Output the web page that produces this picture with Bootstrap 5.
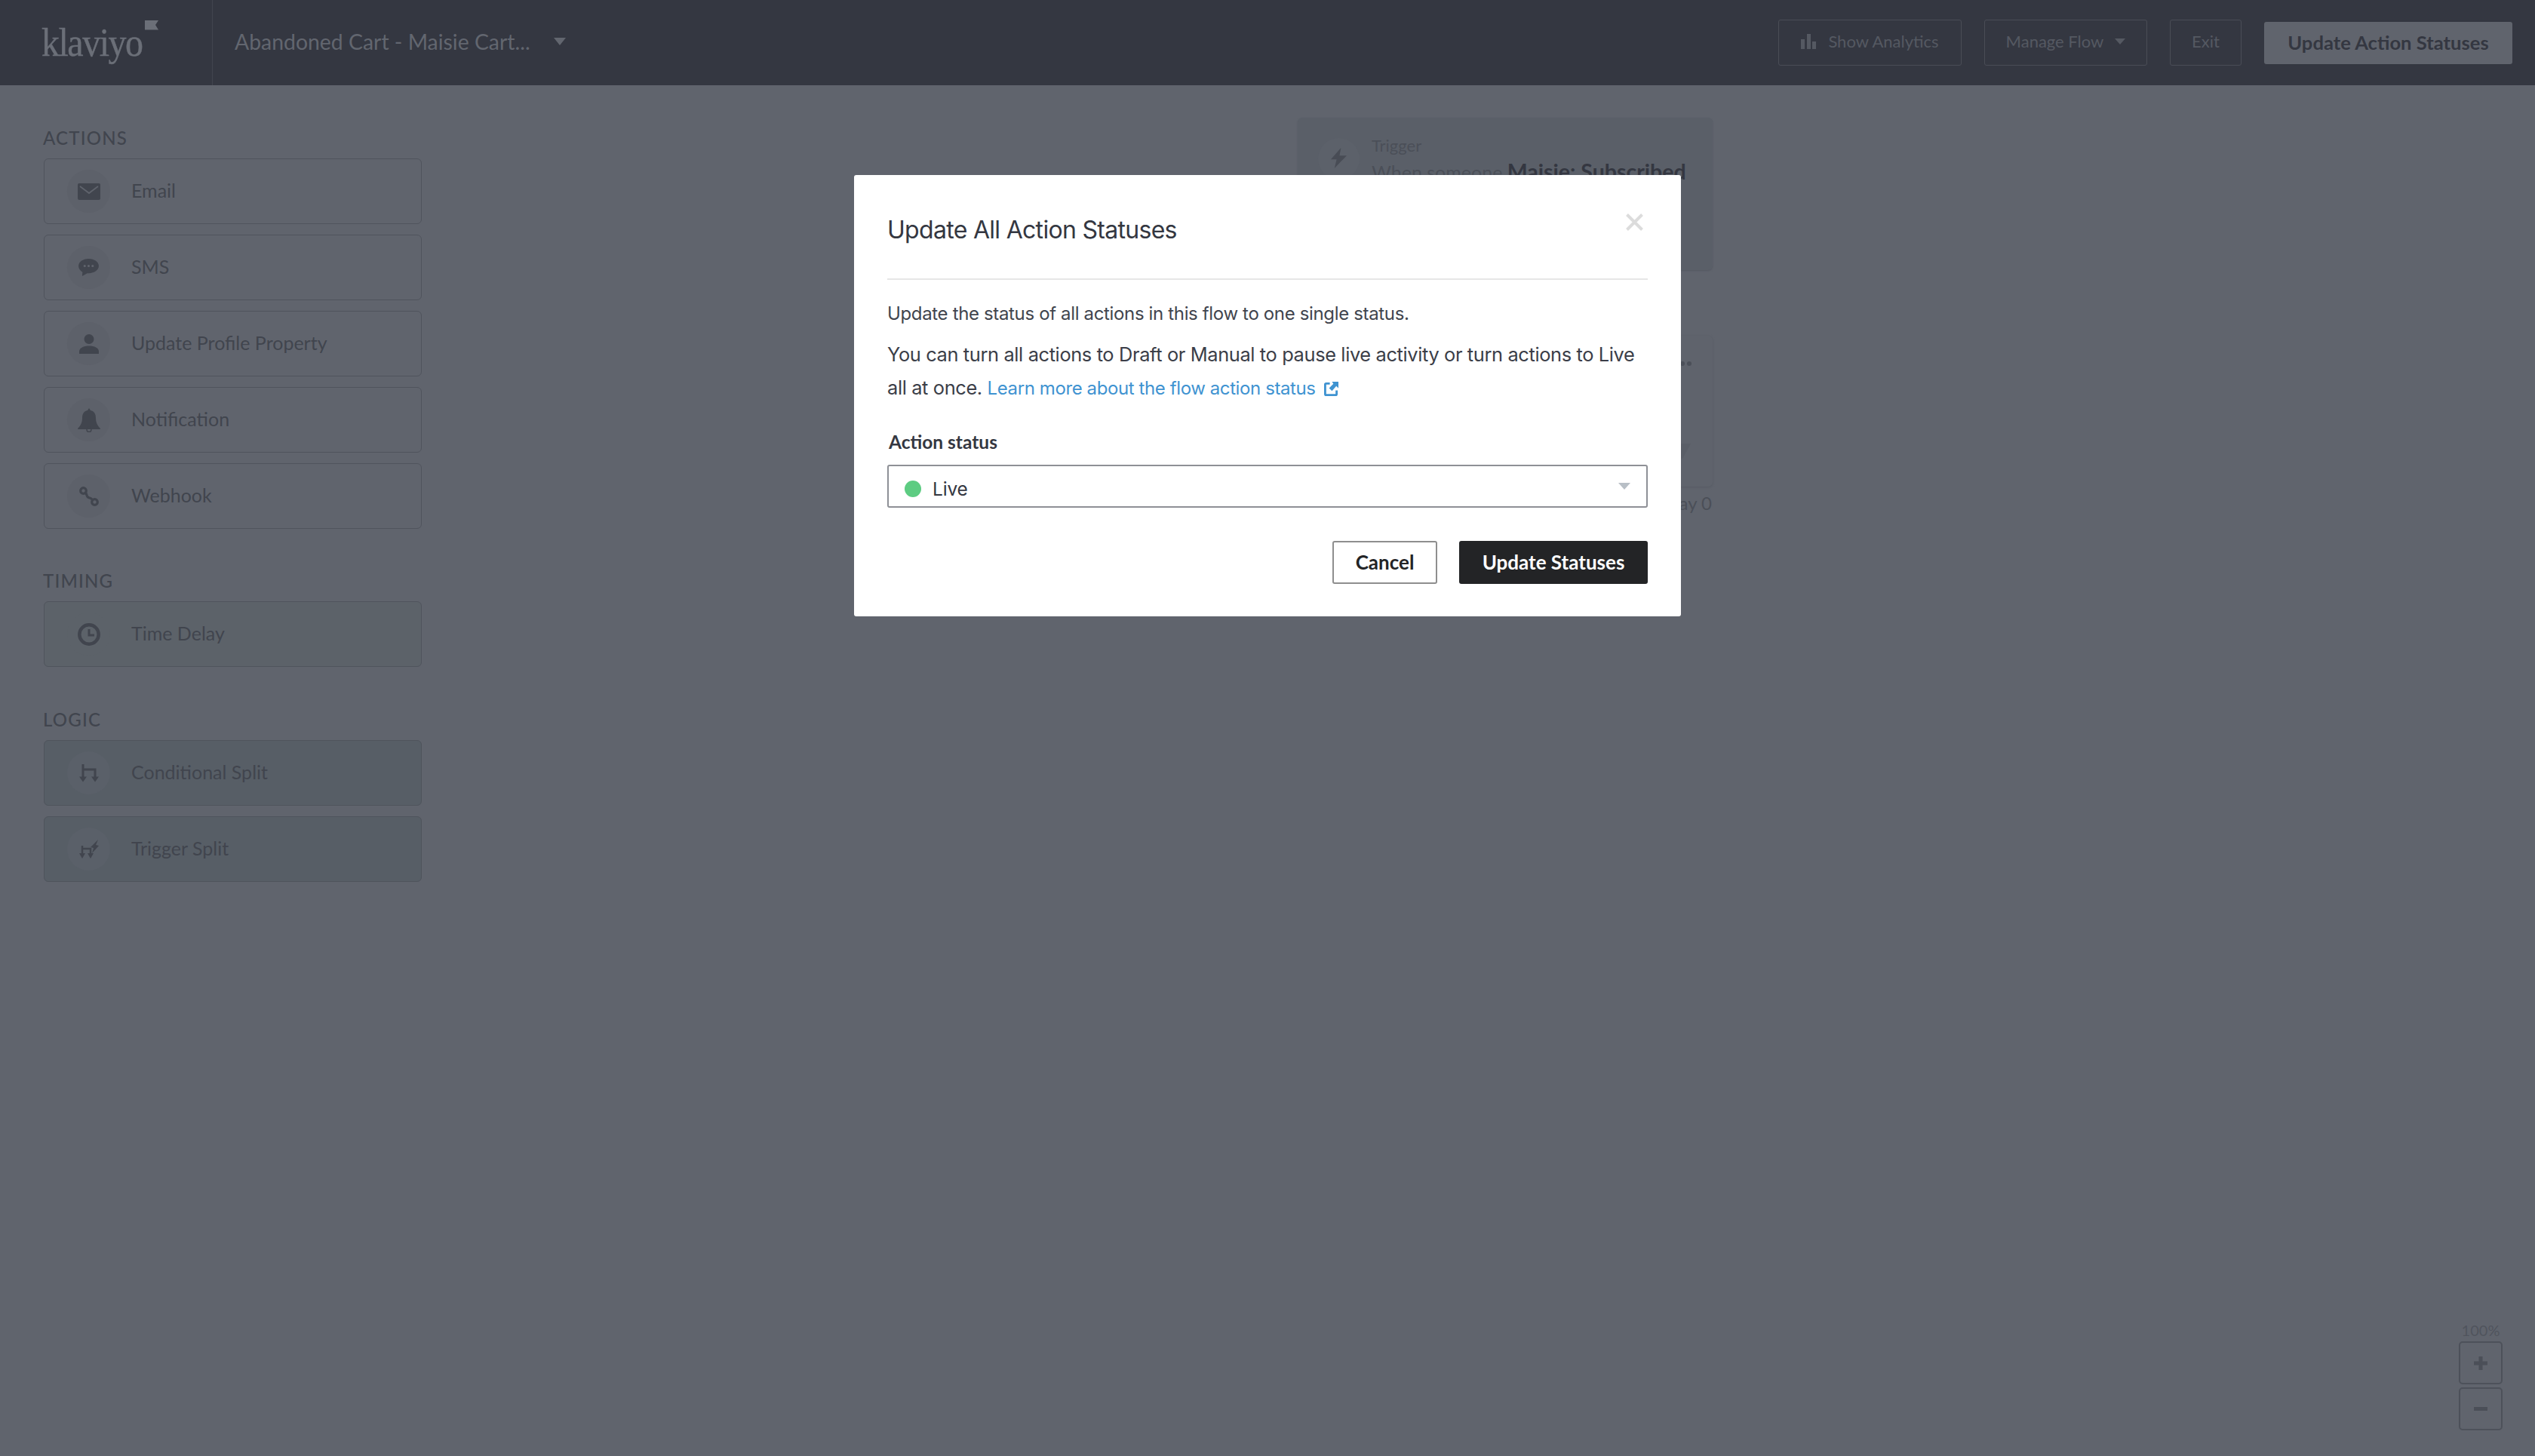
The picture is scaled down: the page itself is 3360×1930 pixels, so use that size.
<!DOCTYPE html>
<html lang="en"><head><meta charset="utf-8"><title>Update All Action Statuses</title>
<link rel="stylesheet" href="https://cdn.jsdelivr.net/npm/bootstrap@5.3.0/dist/css/bootstrap.min.css">
<style>
html,body{height:100%}
body{background:#60646d;font-family:"Lato","Liberation Sans",sans-serif;color:#343741;overflow:hidden;position:relative}
.top-bar{height:113px;background:#343741;padding:0}
.brand-cell{width:282px;height:113px;border-right:1px solid #41454e;padding-left:55px;display:flex;align-items:center}
.logo-word{font-family:"Liberation Serif",serif;font-size:48px;line-height:1;color:#6b6f78;letter-spacing:-1.5px;transform:scaleY(1.12);margin-top:-2px;-webkit-text-stroke:.4px #6b6f78}
.logo-flag{margin:-46px 0 0 4px;flex:none}
.flow-title{font-size:28.4px;color:#62666f;margin-left:29px;width:392px;white-space:nowrap;padding-bottom:3px}
.tri{display:inline-block;width:0;height:0;border-left:8px solid transparent;border-right:8px solid transparent;border-top:10px solid #62666f}
.title-caret{margin-left:31px;margin-top:-3px}
.bar-btn{height:61px;border:1px solid #4a4d56;border-radius:3px;color:#555962;font-size:22px;display:flex;align-items:center;justify-content:center;background:transparent;padding:0 0 4px}
.b-analytics{width:243px;gap:16px}.b-manage{width:216px;gap:15px}.b-exit{width:95px}
.b-manage .tri{border-left-width:7px;border-right-width:7px;border-top-width:8px;border-top-color:#555962}
.b-update{width:329px;height:56px;background:#60646d;border:0;border-radius:3px;color:#343741;font-size:25.6px;font-weight:700;padding:0}
.bar-actions{gap:30px;margin-right:30px}
.side-panel{width:501px;margin-left:58px;padding-top:60px}
.group-title{font-size:24px;line-height:20px;color:#41454e;font-weight:500;margin:0 0 17px -1px;letter-spacing:1.2px}
.tool-card{height:87px;margin-bottom:14px;border:1px solid #50545d;border-radius:6px;background:transparent;display:flex;flex-direction:row;align-items:center;padding-left:30px;color:#41454e;font-size:25px}
.tool-label{padding-bottom:2px}
.tool-card.timing{background:#5c6269}
.tool-card.logic{background:#575e66;border-color:#4f545c}
.icon-disc{width:57px;height:57px;border-radius:50%;background:#5d616a;display:flex;align-items:center;justify-content:center;margin-right:28px;flex:none}
.timing .icon-disc{background:#5c6269}.logic .icon-disc{background:#5a6069}
.group-gap{height:46px}
.group-gap.first{height:45px}
.tool-ico{fill:#41454e}
.flow-node{position:absolute;border-radius:6px;background:#5a5f68;left:1720px;width:550px;color:#444851;box-shadow:0 1px 2px #555962}
.node-trigger{top:156px;height:202px}
.node-second{top:445px;height:200px;background:#5f636c;box-shadow:0 1px 3px #565a63}
.node-disc{position:absolute;left:27px;top:27px;width:55px;height:55px;border-radius:50%;background:#5c616a}
.node-icon{position:absolute;left:44px;top:40px}
.node-label{position:absolute;left:98px;top:20px;font-size:22px;color:#4b4f58}
.node-line{position:absolute;left:98px;top:50px;font-size:25px;white-space:nowrap;color:#4b4f58}
.node-line b{font-size:28.5px;color:#343741;font-weight:700}
.node-dots{position:absolute;left:490px;top:32px}
.node-funnel{position:absolute;left:480px;top:143px}
.delay-note{position:absolute;left:2100px;top:653px;width:169px;text-align:right;font-size:24px;color:#4b4f58;line-height:28px}
.dialog-box{position:absolute;left:1132px;top:232px;width:1096px;height:585px;border:0;border-radius:3px;background:#fff}
.dialog-box .modal-header{height:139px;margin:0 44px;padding:0;border-bottom:2px solid #e6e6e6;align-items:flex-start;justify-content:space-between}
.dialog-box h5{font-family:"Inter","Lato",sans-serif;font-size:32px;font-weight:400;line-height:40px;margin:53px 0 0;color:#343741;letter-spacing:-.7px}
.close-x{margin:51px 6px 0 0;padding:0;border:0;background:none;line-height:0}
.dialog-box .modal-body{padding:0 44px;flex:none}
.msg-a{font-family:"Inter","Lato",sans-serif;font-size:24px;line-height:30px;margin:30px 0 0;letter-spacing:-.35px;color:#41454e}
.msg-b{font-family:"Inter","Lato",sans-serif;font-size:25.4px;line-height:44px;margin:17px 0 0;letter-spacing:-.37px;color:#3b3e48}
.msg-b a{color:#3f93d1;text-decoration:none;font-size:24px;letter-spacing:-.4px}
.msg-b svg{margin-left:11px;vertical-align:-2px}
.field-label{font-size:24.5px;font-weight:700;margin:34px 0 0 2px;line-height:30px;display:block;color:#343741}
.status-select{height:57px;margin-top:15px;border:2px solid #8e9096;border-radius:3px;display:flex;align-items:center;padding:7px 21px 0 21px;position:relative}
.status-dot{width:22px;height:22px;border-radius:50%;background:#5dcc82;margin-right:15px}
.status-text{font-family:"Inter","Lato",sans-serif;font-size:24.5px;letter-spacing:-.2px}
.tri-sel{margin-left:auto;margin-top:-7px;border-left-width:8px;border-right-width:8px;border-top-width:9px;border-top-color:#b8bfc6}
.dialog-box .modal-footer{padding:0 44px;margin-top:44px;border:0;gap:29px;justify-content:flex-end}
.dialog-box .modal-footer>*{margin:0}
.act-btn{height:57px;font-size:26px;font-weight:700;border-radius:3px;padding:0}
.act-cancel{width:139px;background:#fff;border:2px solid #8e8e8e;color:#232426}
.act-save{width:250px;background:#232426;border:0;color:#fff}
.zoom-dock{position:absolute;left:3259px;top:1752px;width:58px;display:flex;flex-direction:column;align-items:center;gap:4px}
.zoom-val{font-size:20px;line-height:22px;color:#50545d;height:22px}
.zoom-btn{width:58px;height:57px;border:2px solid #4d515a;border-radius:5px;display:flex;align-items:center;justify-content:center;background:transparent;padding:0}
</style></head>
<body>
<nav class="navbar top-bar flex-nowrap">
  <div class="d-flex align-items-center">
    <div class="brand-cell"><span class="logo-word">klaviyo</span>
      <svg class="logo-flag" width="18" height="13" viewBox="0 0 18 13"><path d="M0 0H18L14 6 18 12.500H0Z" fill="#6b6f78"/></svg></div>
    <div class="flow-title">Abandoned Cart - Maisie Cart...</div>
    <span class="tri title-caret"></span>
  </div>
  <div class="d-flex align-items-center bar-actions">
    <button class="btn bar-btn b-analytics" type="button"><svg width="20" height="20" viewBox="0 0 20 20" fill="#555962"><rect x="0" y="7" width="5" height="13"/><rect x="8" y="0" width="5" height="20"/><rect x="15" y="10" width="5" height="10"/></svg>Show Analytics</button>
    <button class="btn bar-btn b-manage" type="button">Manage Flow<span class="tri"></span></button>
    <button class="btn bar-btn b-exit" type="button">Exit</button>
    <button class="btn b-update" type="button">Update Action Statuses</button>
  </div>
</nav>

<aside class="side-panel">
  <div class="group-title">ACTIONS</div>
  <div class="card tool-card"><span class="icon-disc"><svg width="30" height="22" viewBox="0 0 30 22"><path class="tool-ico" d="M2 0H28a2 2 0 0 1 2 2V20a2 2 0 0 1-2 2H2a2 2 0 0 1-2-2V2a2 2 0 0 1 2-2Z"/><path d="M3 4L15 13 27 4" fill="none" stroke="#60646d" stroke-width="1.800"/></svg></span><span class="tool-label">Email</span></div>
  <div class="card tool-card"><span class="icon-disc"><svg width="27" height="23" viewBox="0 0 28 24"><path class="tool-ico" d="M14 0C6 0 0 4.500 0 10c0 3.500 2 6.500 5.500 8.500L5 24l7-4h2c8 0 14-4.500 14-10S22 0 14 0Z"/><circle cx="8.500" cy="10" r="1.600" fill="#60646d"/><circle cx="14" cy="10" r="1.600" fill="#60646d"/><circle cx="19.500" cy="10" r="1.600" fill="#60646d"/></svg></span><span class="tool-label">SMS</span></div>
  <div class="card tool-card"><span class="icon-disc"><svg width="26" height="26" viewBox="0 0 26 26"><circle class="tool-ico" cx="13" cy="6.500" r="6.500"/><path class="tool-ico" d="M0 26v-3c0-5 6-7.500 13-7.500S26 18 26 23v3Z"/></svg></span><span class="tool-label">Update Profile Property</span></div>
  <div class="card tool-card"><span class="icon-disc"><svg width="30" height="32" viewBox="0 0 30 32"><path class="tool-ico" d="M15 0l2 3c5 1 7 5 7 10 0 6 2 10 6 14 0 1-1 1-1 1H1s-1 0-1-1c4-4 6-8 6-14 0-5 2-9 7-10Z"/><circle cx="15" cy="28.500" r="3" fill="none" stroke="#41454e" stroke-width="1.500"/></svg></span><span class="tool-label">Notification</span></div>
  <div class="card tool-card"><span class="icon-disc"><svg width="26" height="26" viewBox="0 0 26 26" fill="none" stroke="#41454e" stroke-width="3.200"><circle cx="5.500" cy="5.500" r="3.800"/><circle cx="20.500" cy="20.500" r="3.800"/><path d="M8.500 8.500c2 2 1 4 3 5.500s3.500.5 5.500 3"/></svg></span><span class="tool-label">Webhook</span></div>
  <div class="group-gap first"></div>
  <div class="group-title">TIMING</div>
  <div class="card tool-card timing"><span class="icon-disc"><svg width="30" height="30" viewBox="0 0 30 30" fill="none" stroke="#41454e"><circle cx="15" cy="15" r="12.700" stroke-width="4.500"/><path d="M15 8v8h7" stroke-width="3"/></svg></span><span class="tool-label">Time Delay</span></div>
  <div class="group-gap"></div>
  <div class="group-title">LOGIC</div>
  <div class="card tool-card logic"><span class="icon-disc"><svg width="26" height="24" viewBox="0 0 26 24" fill="none" stroke="#41454e" stroke-width="3"><path d="M5 18V0M5 7H21V18"/><path d="M0 16.500l5 7 5-7ZM16 16.500l5 7 5-7Z" fill="#41454e" stroke="none"/></svg></span><span class="tool-label">Conditional Split</span></div>
  <div class="card tool-card logic"><span class="icon-disc"><svg width="26" height="25" viewBox="0 0 26 25"><path d="M4 19V8M4 12H15V19" fill="none" stroke="#41454e" stroke-width="2.500"/><path d="M0 18l4 7 4-7ZM11 18l4 7 4-7ZM25 0L15 10l4 1-2 7 9-10-4-1Z" fill="#41454e"/></svg></span><span class="tool-label">Trigger Split</span></div>
</aside>

<div class="flow-node node-trigger">
  <span class="node-disc"></span>
  <svg class="node-icon" width="21" height="27" viewBox="0 0 22 32" fill="#484c55" preserveAspectRatio="none"><path d="M14 0L0 18h8L5 32 22 12H12Z"/></svg>
  <span class="node-label">Trigger</span>
  <span class="node-line">When someone <b>Maisie: Subscribed</b></span>
</div>
<div class="flow-node node-second">
  <svg class="node-funnel" width="42" height="22" viewBox="0 0 42 22" fill="#5a5e67"><path d="M0 0H41L30 20H12Z"/></svg>
  <svg class="node-dots" width="34" height="10" viewBox="0 0 34 10" fill="#4b4f58"><circle cx="11" cy="5" r="3"/><circle cx="20" cy="5" r="3"/><circle cx="29" cy="5" r="3"/></svg>
</div>
<div class="delay-note">Delay 0</div>

<div class="modal-content dialog-box" role="dialog">
  <div class="modal-header">
    <h5 class="modal-title">Update All Action Statuses</h5>
    <button class="close-x" type="button" aria-label="Close"><svg width="23" height="23" viewBox="0 0 23 23" stroke="#dcdcdc" stroke-width="4"><path d="M1.500 1.500L21.500 21.500M21.500 1.500L1.500 21.500"/></svg></button>
  </div>
  <div class="modal-body">
    <p class="msg-a">Update the status of all actions in this flow to one single status.</p>
    <div class="msg-b"><div>You can turn all actions to Draft or Manual to pause live activity or turn actions to Live</div><div><span>all at once.</span> <a href="#">Learn more about the flow action status<svg width="19" height="19" viewBox="0 0 20 20"><path d="M8 1H3a3 3 0 0 0-3 3v13a3 3 0 0 0 3 3h13a3 3 0 0 0 3-3v-5h-3v5H3V4h5Z" fill="#3f93d1"/><path d="M11 0h9v9l-3-3-6 7-4-4 6-6Z" fill="#3f93d1"/></svg></a></div></div>
    <label class="field-label">Action status</label>
    <div class="status-select"><span class="status-dot"></span><span class="status-text">Live</span><span class="tri tri-sel"></span></div>
  </div>
  <div class="modal-footer">
    <button class="btn act-btn act-cancel" type="button">Cancel</button>
    <button class="btn act-btn act-save" type="button">Update Statuses</button>
  </div>
</div>

<div class="zoom-dock">
  <div class="zoom-val">100%</div>
  <button class="btn zoom-btn" type="button" aria-label="Zoom in"><svg width="18" height="18" viewBox="0 0 18 18" fill="#4b4f58"><path d="M6.500 0h5v6.500H18v5h-6.500V18h-5v-6.500H0v-5h6.500Z"/></svg></button>
  <button class="btn zoom-btn" type="button" aria-label="Zoom out"><svg width="18" height="6" viewBox="0 0 18 6" fill="#4b4f58"><rect width="18" height="5"/></svg></button>
</div>
<script src="https://cdn.jsdelivr.net/npm/bootstrap@5.3.0/dist/js/bootstrap.bundle.min.js"></script>
</body></html>
